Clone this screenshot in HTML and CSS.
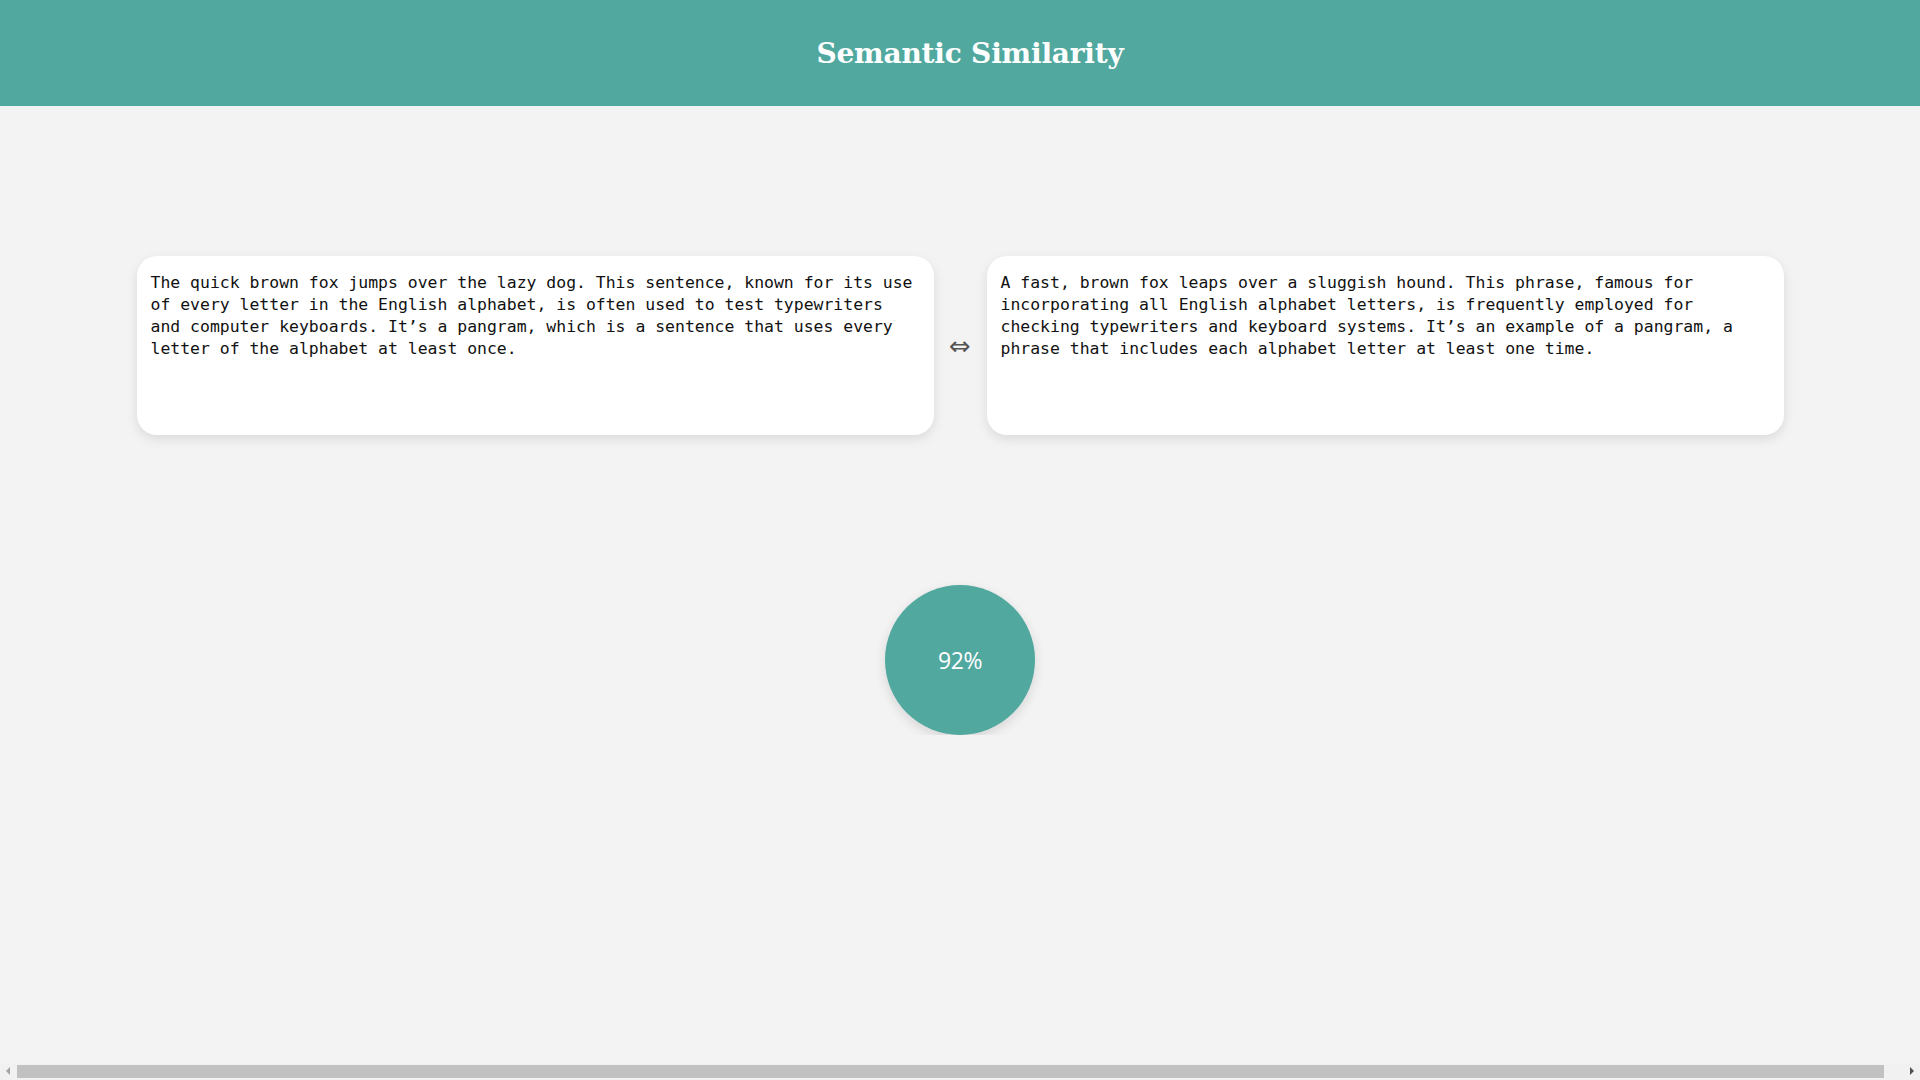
FILE: index.html
```html
<!DOCTYPE html>
<html lang="en">
<head>
<meta charset="utf-8">
<title>Semantic Similarity</title>
<link rel="stylesheet" href="styles.css">
</head>
<body>
<header class="topbar">
  <h1 class="title">Semantic Similarity</h1>
</header>
<main class="main">
  <section class="pair">
    <div class="card">The quick brown fox jumps over the lazy dog. This sentence, known for its use of every letter in the English alphabet, is often used to test typewriters and computer keyboards. It’s a pangram, which is a sentence that uses every letter of the alphabet at least once.</div>
    <div class="arrow">⇔</div>
    <div class="card">A fast, brown fox leaps over a sluggish hound. This phrase, famous for incorporating all English alphabet letters, is frequently employed for checking typewriters and keyboard systems. It’s an example of a pangram, a phrase that includes each alphabet letter at least one time.</div>
  </section>
  <section class="result">
    <div class="score">92%</div>
  </section>
</main>
<div class="hscroll">
  <span class="hscroll-btn hscroll-left"></span>
  <span class="hscroll-track"><span class="hscroll-thumb"></span></span>
  <span class="hscroll-btn hscroll-right"></span>
</div>
</body>
</html>
```
FILE: styles.css
```css
html, body {
  margin: 0;
  padding: 0;
  background: #f3f3f3;
}
body {
  font-family: "Open Sans", sans-serif;
}
.topbar {
  width: 100%;
  padding: 0 10px;
  height: 106px;
  background: #51a89f;
  display: flex;
  align-items: center;
  justify-content: center;
}
.title {
  margin: 0;
  color: #ffffff;
  font-family: "DejaVu Serif", serif;
  font-weight: bold;
  font-size: 28px;
  letter-spacing: -0.2px;
}
.main {
  display: flex;
  flex-direction: column;
  align-items: center;
}
.pair {
  margin-top: 150px;
  display: flex;
  align-items: center;
}
.card {
  box-sizing: border-box;
  width: 797px;
  height: 179px;
  padding: 16px 14px 11px;
  background: #ffffff;
  border-radius: 20px;
  box-shadow: 0 4px 12px rgba(0, 0, 0, 0.1);
  font-family: "DejaVu Sans Mono", monospace;
  font-size: 16.45px;
  line-height: 22px;
  color: #111;
}
.arrow {
  width: 53px;
  text-align: center;
  font-family: "DejaVu Sans", sans-serif;
  font-size: 26px;
  color: #555;
}
.result {
  margin-top: 150px;
}
.score {
  width: 150px;
  height: 150px;
  border-radius: 50%;
  background: #51a89f;
  box-shadow: 0 4px 12px rgba(0, 0, 0, 0.12);
  display: flex;
  align-items: center;
  justify-content: center;
  color: #ffffff;
  font-family: "Open Sans", sans-serif;
  font-weight: 500;
  font-size: 23px;
  letter-spacing: -0.5px;
}
.hscroll {
  position: fixed;
  left: 0;
  right: 0;
  bottom: 0;
  height: 17px;
  background: #f1f1f1;
  display: flex;
  align-items: center;
}
.hscroll-btn {
  width: 17px;
  height: 17px;
  position: relative;
  flex: none;
}
.hscroll-left::after,
.hscroll-right::after {
  content: "";
  position: absolute;
  top: 4px;
  border-top: 4px solid transparent;
  border-bottom: 4px solid transparent;
}
.hscroll-left::after {
  left: 6px;
  border-right: 4px solid #a3a3a3;
}
.hscroll-right::after {
  left: 7px;
  border-left: 4px solid #505050;
}
.hscroll-track {
  flex: 1;
  height: 13px;
  display: flex;
}
.hscroll-thumb {
  width: 99%;
  background: #c1c1c1;
}
```
